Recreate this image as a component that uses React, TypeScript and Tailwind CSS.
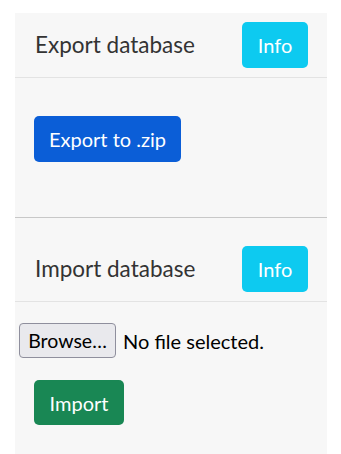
import React from 'react';

const font = { fontFamily: 'Lato, "Noto Sans", sans-serif' };

export default function App() {
  return (
    <div className="min-h-[454px] bg-white pt-[13px]" style={font}>
      <div className="ml-[15px] w-[312px] min-h-[441px] bg-[#f7f7f7]">
        {/* Export card */}
        <div className="flex h-[65px] items-center justify-between border-b border-[#e3e3e3] pl-[20px] pr-[19px]">
          <h4 className="text-[22.5px] leading-none text-[#333333]">Export database</h4>
          <button className="h-[46px] w-[66px] rounded-[5px] bg-[#0dcaf0] text-[20px] text-white">
            Info
          </button>
        </div>
        <div className="h-[139px] px-[19px] pt-[38px]">
          <button className="h-[46px] w-[147px] rounded-[5px] bg-[#0b5ed7] text-[20px] text-white">
            Export to .zip
          </button>
        </div>

        <div className="h-px bg-[#c8c8c8]" />

        {/* Import card */}
        <div className="flex h-[84px] items-end border-b border-[#e3e3e3] pb-[9px] pl-[20px] pr-[19px]">
          <div className="flex w-full items-center justify-between">
            <h4 className="text-[22.5px] leading-none text-[#333333]">Import database</h4>
            <button className="h-[46px] w-[66px] rounded-[5px] bg-[#0dcaf0] text-[20px] text-white">
              Info
            </button>
          </div>
        </div>
        <div className="pt-[21px]">
          <div className="flex items-center pl-[4px]">
            <button className="h-[35px] w-[97px] rounded-[4px] border border-[#8f8f9d] bg-[#e9e9ed] text-[19.5px] text-black">
              Browse…
            </button>
            <span className="ml-[7px] text-[20px] text-black">No file selected.</span>
          </div>
          <div className="px-[19px] pt-[22px]">
            <button className="h-[45px] w-[90px] rounded-[5px] bg-[#198754] text-[20px] text-white">
              Import
            </button>
          </div>
        </div>
      </div>
    </div>
  );
}
